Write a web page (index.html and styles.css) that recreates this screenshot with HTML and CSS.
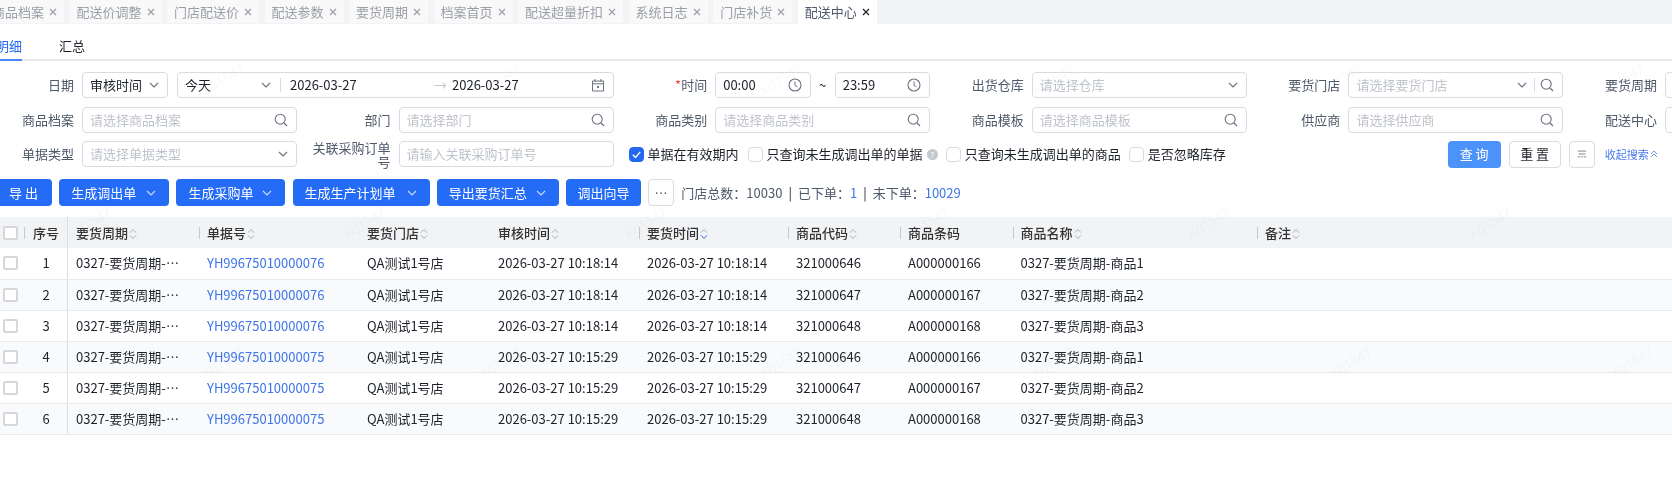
FILE: index.html
```html
<!DOCTYPE html>
<html lang="zh-CN">
<head>
<meta charset="utf-8">
<title>配送中心</title>
<link rel="stylesheet" href="styles.css">
</head>
<body>
<svg class="defs" width="0" height="0" aria-hidden="true">
  <symbol id="i-x" viewBox="0 0 8 8"><path d="M1 1l6 6M7 1L1 7" fill="none" stroke="currentColor" stroke-width="1.2"/></symbol>
  <symbol id="i-down" viewBox="0 0 10 6"><path d="M1 1l4 4 4-4" fill="none" stroke="currentColor" stroke-width="1.1"/></symbol>
  <symbol id="i-search" viewBox="0 0 14 14"><circle cx="6.2" cy="6.2" r="5" fill="none" stroke="currentColor" stroke-width="1.1"/><path d="M10 10l3 3" stroke="currentColor" stroke-width="1.2"/></symbol>
  <symbol id="i-clock" viewBox="0 0 14 14"><circle cx="7" cy="7" r="6" fill="none" stroke="currentColor" stroke-width="1.1"/><path d="M7 3.5V7.4l2.4 1.4" fill="none" stroke="currentColor" stroke-width="1"/></symbol>
  <symbol id="i-cal" viewBox="0 0 14 14"><path d="M1.5 3h11v10h-11zM1.5 5.8h11M4 1v3M10 1v3" fill="none" stroke="currentColor" stroke-width="1"/><rect x="6" y="8" width="2" height="2" fill="currentColor"/></symbol>
  <symbol id="i-sort" viewBox="0 0 8 12"><path d="M1 4.6l3-3 3 3" fill="none" stroke="#a9aeb8" stroke-width="1"/><path class="sort-d" d="M1 7.4l3 3 3-3" fill="none" stroke="currentColor" stroke-width="1"/></symbol>
  <symbol id="i-tune" viewBox="0 0 12 12"><path d="M1 2.5h10M2 6h8M1 9.5h3M5 9.5h2M8 9.5h3" fill="none" stroke="currentColor" stroke-width="1"/></symbol>
</svg>

<div class="page">
  <div class="tabbar">
    <div class="tab tab-first">商品档案<svg class="ic-x"><use href="#i-x"/></svg></div>
    <div class="tab">配送价调整<svg class="ic-x"><use href="#i-x"/></svg></div>
    <div class="tab">门店配送价<svg class="ic-x"><use href="#i-x"/></svg></div>
    <div class="tab">配送参数<svg class="ic-x"><use href="#i-x"/></svg></div>
    <div class="tab">要货周期<svg class="ic-x"><use href="#i-x"/></svg></div>
    <div class="tab">档案首页<svg class="ic-x"><use href="#i-x"/></svg></div>
    <div class="tab">配送超量折扣<svg class="ic-x"><use href="#i-x"/></svg></div>
    <div class="tab">系统日志<svg class="ic-x"><use href="#i-x"/></svg></div>
    <div class="tab">门店补货<svg class="ic-x"><use href="#i-x"/></svg></div>
    <div class="tab tab-active">配送中心<svg class="ic-x"><use href="#i-x"/></svg></div>
  </div>

  <div class="subtabs">
    <div class="subtab subtab-active">明细</div>
    <div class="subtab">汇总</div>
  </div>

  <div class="filters">
    <label class="lbl">日期</label>
    <div class="date-wrap">
      <div class="box date-type">审核时间<svg class="ic-down"><use href="#i-down"/></svg></div>
      <div class="box date-range">
        <span class="preset">今天<svg class="ic-down"><use href="#i-down"/></svg></span>
        <span class="range-val">2026-03-27</span>
        <span class="arrow">→</span>
        <span class="range-val">2026-03-27</span>
        <svg class="ic-md ic-end"><use href="#i-cal"/></svg>
      </div>
    </div>
    <label class="lbl"><span class="req">*</span>时间</label>
    <div class="time-wrap">
      <div class="box time">00:00<svg class="ic-md ic-end"><use href="#i-clock"/></svg></div>
      <span class="tilde">~</span>
      <div class="box time">23:59<svg class="ic-md ic-end"><use href="#i-clock"/></svg></div>
    </div>
    <label class="lbl">出货仓库</label>
    <div class="box ph">请选择仓库<svg class="ic-down ic-end"><use href="#i-down"/></svg></div>
    <label class="lbl">要货门店</label>
    <div class="box ph">请选择要货门店<svg class="ic-down ic-end ic-tight"><use href="#i-down"/></svg><span class="vline"></span><svg class="ic-md"><use href="#i-search"/></svg></div>
    <label class="lbl">要货周期</label>
    <div class="box"></div>

    <label class="lbl">商品档案</label>
    <div class="box ph">请选择商品档案<svg class="ic-md ic-end"><use href="#i-search"/></svg></div>
    <label class="lbl">部门</label>
    <div class="box ph">请选择部门<svg class="ic-md ic-end"><use href="#i-search"/></svg></div>
    <label class="lbl">商品类别</label>
    <div class="box ph">请选择商品类别<svg class="ic-md ic-end"><use href="#i-search"/></svg></div>
    <label class="lbl">商品模板</label>
    <div class="box ph">请选择商品模板<svg class="ic-md ic-end"><use href="#i-search"/></svg></div>
    <label class="lbl">供应商</label>
    <div class="box ph">请选择供应商<svg class="ic-md ic-end"><use href="#i-search"/></svg></div>
    <label class="lbl">配送中心</label>
    <div class="box"></div>

    <label class="lbl">单据类型</label>
    <div class="box ph">请选择单据类型<svg class="ic-down ic-end"><use href="#i-down"/></svg></div>
    <label class="lbl lbl-wrap">关联采购订单号</label>
    <div class="box ph">请输入关联采购订单号</div>
    <div class="options">
      <span class="cb cb-on"><svg viewBox="0 0 14 14"><path d="M3 7.2l3 3 5-6" fill="none" stroke="#fff" stroke-width="1.5"/></svg></span><span class="opt-text opt-1">单据在有效期内</span>
      <span class="cb"></span><span class="opt-text">只查询未生成调出单的单据</span><span class="help">?</span>
      <span class="cb"></span><span class="opt-text">只查询未生成调出单的商品</span>
      <span class="cb"></span><span class="opt-text">是否忽略库存</span>
      <span class="actions">
        <button class="btn-query">查 询</button>
        <button class="btn-reset">重 置</button>
        <button class="btn-tune"><svg class="ic-tune"><use href="#i-tune"/></svg></button>
        <span class="collapse">收起搜索<svg class="ic-up" viewBox="0 0 8 8"><path d="M1 4l3-3 3 3M1 7l3-3 3 3" fill="none" stroke="currentColor" stroke-width=".8"/></svg></span>
      </span>
    </div>
  </div>

  <div class="toolbar">
    <button class="btn btn-export">导 出</button>
    <button class="btn btn-w1">生成调出单<svg class="ic-down"><use href="#i-down"/></svg></button>
    <button class="btn btn-w2">生成采购单<svg class="ic-down"><use href="#i-down"/></svg></button>
    <button class="btn btn-w3">生成生产计划单<svg class="ic-down"><use href="#i-down"/></svg></button>
    <button class="btn btn-w4">导出要货汇总<svg class="ic-down"><use href="#i-down"/></svg></button>
    <button class="btn btn-w5">调出向导</button>
    <button class="btn-more">⋯</button>
    <div class="summary">门店总数：10030<span class="pipe">|</span>已下单：<a class="num">1</a><span class="pipe">|</span>未下单：<a class="num">10029</a></div>
  </div>

  <table class="grid">
    <colgroup>
      <col class="c0"><col class="c1"><col class="c2"><col class="c3"><col class="c4"><col class="c5"><col class="c6"><col class="c7"><col class="c8"><col class="c9"><col>
    </colgroup>
    <thead>
      <tr>
        <th class="cell-check"><span class="tcb"></span></th>
        <th class="cell-no">序号</th>
        <th>要货周期<svg class="ic-sort"><use href="#i-sort"/></svg></th>
        <th class="sep">单据号<svg class="ic-sort"><use href="#i-sort"/></svg></th>
        <th>要货门店<svg class="ic-sort"><use href="#i-sort"/></svg></th>
        <th>审核时间<svg class="ic-sort"><use href="#i-sort"/></svg></th>
        <th class="sep">要货时间<svg class="ic-sort sort-on"><use href="#i-sort"/></svg></th>
        <th class="sep">商品代码<svg class="ic-sort"><use href="#i-sort"/></svg></th>
        <th class="sep">商品条码</th>
        <th class="sep">商品名称<svg class="ic-sort"><use href="#i-sort"/></svg></th>
        <th class="sep">备注<svg class="ic-sort"><use href="#i-sort"/></svg></th>
      </tr>
    </thead>
    <tbody>
      <tr><td class="cell-check"><span class="tcb"></span></td><td class="cell-no">1</td><td>0327-要货周期-⋯</td><td><a class="link">YH99675010000076</a></td><td>QA测试1号店</td><td>2026-03-27 10:18:14</td><td>2026-03-27 10:18:14</td><td>321000646</td><td>A000000166</td><td>0327-要货周期-商品1</td><td></td></tr>
      <tr><td class="cell-check"><span class="tcb"></span></td><td class="cell-no">2</td><td>0327-要货周期-⋯</td><td><a class="link">YH99675010000076</a></td><td>QA测试1号店</td><td>2026-03-27 10:18:14</td><td>2026-03-27 10:18:14</td><td>321000647</td><td>A000000167</td><td>0327-要货周期-商品2</td><td></td></tr>
      <tr><td class="cell-check"><span class="tcb"></span></td><td class="cell-no">3</td><td>0327-要货周期-⋯</td><td><a class="link">YH99675010000076</a></td><td>QA测试1号店</td><td>2026-03-27 10:18:14</td><td>2026-03-27 10:18:14</td><td>321000648</td><td>A000000168</td><td>0327-要货周期-商品3</td><td></td></tr>
      <tr><td class="cell-check"><span class="tcb"></span></td><td class="cell-no">4</td><td>0327-要货周期-⋯</td><td><a class="link">YH99675010000075</a></td><td>QA测试1号店</td><td>2026-03-27 10:15:29</td><td>2026-03-27 10:15:29</td><td>321000646</td><td>A000000166</td><td>0327-要货周期-商品1</td><td></td></tr>
      <tr><td class="cell-check"><span class="tcb"></span></td><td class="cell-no">5</td><td>0327-要货周期-⋯</td><td><a class="link">YH99675010000075</a></td><td>QA测试1号店</td><td>2026-03-27 10:15:29</td><td>2026-03-27 10:15:29</td><td>321000647</td><td>A000000167</td><td>0327-要货周期-商品2</td><td></td></tr>
      <tr><td class="cell-check"><span class="tcb"></span></td><td class="cell-no">6</td><td>0327-要货周期-⋯</td><td><a class="link">YH99675010000075</a></td><td>QA测试1号店</td><td>2026-03-27 10:15:29</td><td>2026-03-27 10:15:29</td><td>321000648</td><td>A000000168</td><td>0327-要货周期-商品3</td><td></td></tr>
    </tbody>
  </table>

  <svg class="watermark" width="1672" height="504" aria-hidden="true">
    <g class="wm">
      <text transform="translate(205 95) rotate(-30)">xzj1547</text>
      <text transform="translate(482 95) rotate(-30)">xzj1547</text>
      <text transform="translate(763 95) rotate(-30)">xzj1547</text>
      <text transform="translate(1035 95) rotate(-30)">xzj1547</text>
      <text transform="translate(1323 95) rotate(-30)">xzj1547</text>
      <text transform="translate(1605 95) rotate(-30)">xzj1547</text>
      <text transform="translate(72 238) rotate(-30)">xzj1547</text>
      <text transform="translate(346 238) rotate(-30)">xzj1547</text>
      <text transform="translate(628 238) rotate(-30)">xzj1547</text>
      <text transform="translate(910 238) rotate(-30)">xzj1547</text>
      <text transform="translate(1191 238) rotate(-30)">xzj1547</text>
      <text transform="translate(1472 238) rotate(-30)">xzj1547</text>
      <text transform="translate(205 378) rotate(-30)">xzj1547</text>
      <text transform="translate(482 378) rotate(-30)">xzj1547</text>
      <text transform="translate(763 378) rotate(-30)">xzj1547</text>
      <text transform="translate(1035 378) rotate(-30)">xzj1547</text>
      <text transform="translate(1333 378) rotate(-30)">xzj1547</text>
      <text transform="translate(1614 378) rotate(-30)">xzj1547</text>
    </g>
  </svg>
</div>
</body>
</html>
```
FILE: styles.css
```css
* { box-sizing: border-box; }
html, body { margin: 0; padding: 0; background: #fff; }
.defs { position: absolute; }
.page {
  position: relative;
  width: 1672px;
  height: 504px;
  overflow: hidden;
  background: #fff;
  font: 13px/18px "Noto Sans CJK SC", "Noto Sans", sans-serif;
  color: #1d2129;
  filter: blur(0.5px);
}
svg { display: block; flex: none; }

/* top tabs */
.tabbar {
  display: flex;
  gap: 5.5px;
  height: 24px;
  background: #f2f3f5;
  margin-left: -15px;
  width: 1687px;
}
.tab {
  display: flex;
  align-items: center;
  gap: 5px;
  height: 23px;
  padding: 0 7px;
  background: #f9f9fa;
  color: #9a9fa8;
}
.tab-active { background: #fff; color: #4e5969; height: 24px; }
.ic-x { width: 8px; height: 8px; color: #9a9fa8; }
.tab-active .ic-x { color: #1d2129; }

/* sub tabs */
.subtabs {
  display: flex;
  gap: 37px;
  height: 37px;
  margin-left: -4px;
  width: 1676px;
  border-bottom: 2px solid #e8e9ec;
}
.subtab { height: 37px; line-height: 43px; color: #1d2129; }
.subtab-active { color: #2468f2; border-bottom: 2px solid #4a86f5; }

/* filters */
.filters {
  display: grid;
  grid-template-columns: 82px 215px 101.6px 215px 101.6px 215px 101.6px 215px 101.6px 215px 101.6px 215px;
  grid-template-rows: 26px 26px 26px;
  row-gap: 8.5px;
  margin-top: 11px;
  width: 1900px;
}
.lbl { display: flex; align-items: center; justify-content: flex-end; padding-right: 8px; color: #4e5969; white-space: nowrap; }
.lbl-wrap { display: block; white-space: normal; text-align: right; line-height: 14px; padding-left: 10px; padding-top: -1px; }
.req { color: #f53f3f; }
.box {
  display: flex;
  align-items: center;
  height: 100%;
  padding: 0 8px 0 7px;
  border: 1px solid #d9dbe0;
  border-radius: 4px;
  background: #fff;
  white-space: nowrap;
  min-width: 0;
}
.ph { color: #bfc3cb; }
.ic-down { width: 10px; height: 6px; color: #6b7280; }
.ic-md { width: 14px; height: 14px; color: #6b7280; }
.ic-tune { width: 10px; height: 10px; color: #6b7280; }
.ic-end { margin-left: auto; }
.ic-tight { margin-right: 7px; }
.vline { width: 1px; height: 14px; background: #d9dbe0; margin-right: 5px; }

.date-wrap {
  grid-column: span 3;
  display: flex;
  gap: 9px;
}
.date-type { width: 86px; flex: none; justify-content: space-between; color: #1d2129; }
.date-range { flex: 1; color: #1d2129; }
.preset { display: flex; align-items: center; width: 96px; justify-content: space-between; padding-right: 9px; border-right: 1px solid #d9dbe0; line-height: 14px; margin-right: 9px; }
.range-val { width: 144px; flex: none; }
.range-val + .arrow { width: 18px; color: #c4c7ce; }
.arrow + .range-val { width: auto; }
.time-wrap { display: flex; align-items: center; height: 100%; }
.time { flex: 1; color: #1d2129; }
.tilde { width: 24px; text-align: center; flex: none; }

.options {
  grid-column: 5 / span 8;
  display: flex;
  align-items: center;
  padding-left: 15px;
}
.cb {
  width: 15px;
  height: 15px;
  flex: none;
  border: 1px solid #d9dbe0;
  border-radius: 4px;
  background: #fff;
  margin-right: 4px;
}
.cb-on { background: #2468f2; border-color: #2468f2; }
.opt-text { margin-right: 8px; color: #1d2129; white-space: nowrap; }
.opt-1 { margin-right: 9px; }
.help {
  width: 11px; height: 11px;
  margin: 0 8px 0 -4px;
  border-radius: 50%;
  background: #c3c7ce;
  color: #fff;
  font-size: 8px;
  line-height: 11px;
  text-align: center;
}
.actions { display: flex; align-items: center; margin-left: 214px; height: 100%; }
.actions button { height: 27px; border-radius: 4px; font: inherit; padding: 0; cursor: pointer; }
.btn-query { width: 53px; border: 0; background: #4b93fb; color: #fff; margin-right: 8px; }
.btn-reset { width: 52px; border: 1px solid #d9dbe0; background: #fff; color: #1d2129; margin-right: 8px; }
.btn-tune { width: 26px; border: 1px solid #d9dbe0; background: #fff; display: flex; align-items: center; justify-content: center; margin-right: 10px; }
.collapse { display: flex; align-items: center; gap: 1px; font-size: 11px; color: #4a7bf0; white-space: nowrap; }
.ic-up { width: 8px; height: 8px; }

/* toolbar */
.toolbar {
  display: flex;
  align-items: center;
  gap: 7.2px;
  height: 27px;
  margin-top: 12px;
  margin-left: -5px;
}
.btn {
  display: flex;
  align-items: center;
  justify-content: space-between;
  height: 27px;
  padding: 0 13px 0 12px;
  border: 0;
  border-radius: 4px;
  background: #246bf5;
  color: #fff;
  font: inherit;
  cursor: pointer;
}
.btn .ic-down { color: #c9dcff; }
.btn-export { width: 57px; padding: 0 0 0 14px; }
.btn-w1 { width: 110px; }
.btn-w2 { width: 109px; }
.btn-w3 { width: 137px; }
.btn-w4 { width: 122px; }
.btn-w5 { width: 75px; justify-content: center; padding: 0; }
.btn-more {
  width: 26px; height: 27px;
  border: 1px solid #d9dbe0; border-radius: 4px;
  background: #fff; color: #4e5969;
  font: inherit; padding: 0;
}
.summary { color: #4e5969; white-space: nowrap; }
.pipe { margin: 0 6px; color: #1d2129; }
.num { color: #3d74ea; }

/* table */
.grid {
  width: 1672px;
  margin-top: 11px;
  border-collapse: collapse;
  table-layout: fixed;
}
.c0 { width: 25px; }
.c1 { width: 42.5px; }
.c2 { width: 131.5px; }
.c3 { width: 160px; }
.c4 { width: 131px; }
.c5 { width: 149px; }
.c6 { width: 149px; }
.c7 { width: 112px; }
.c8 { width: 112.5px; }
.c9 { width: 244.5px; }
th, td { padding: 0 8px; text-align: left; white-space: nowrap; font-size: 13px; }
th {
  height: 31px;
  background: #f2f3f5;
  color: #333;
  font-weight: 500;
}
th.sep { position: relative; }
th.sep::before {
  content: "";
  position: absolute;
  left: 0;
  top: 10px;
  width: 1px;
  height: 12px;
  background: #c4c7ce;
}
td { height: 31px; border-bottom: 1px solid #e8e9ec; color: #1d2129; }
tbody tr:nth-child(even) td { background: #f9fafb; }
.ic-sort { display: inline-block; width: 8px; height: 12px; color: #a9aeb8; vertical-align: -2px; margin-left: 1px; }
.sort-on { color: #2468f2; }
.cell-check { padding: 0 0 0 3px; position: relative; }
th.cell-check::after {
  content: ""; position: absolute; right: 0; top: 10px; width: 1px; height: 12px; background: #c4c7ce;
}
.cell-no { text-align: center; padding: 0; border-right: 1px solid #dcdee2; }
.tcb { display: block; width: 15px; height: 14px; border: 2px solid #d6d7da; border-radius: 2px; background: #fff; }
.link { color: #3d74ea; }

/* watermark overlay */
.watermark { position: absolute; left: 0; top: 0; pointer-events: none; }
.wm text { font: 13px "Noto Sans", sans-serif; fill: #8a8f99; fill-opacity: .06; }
```
